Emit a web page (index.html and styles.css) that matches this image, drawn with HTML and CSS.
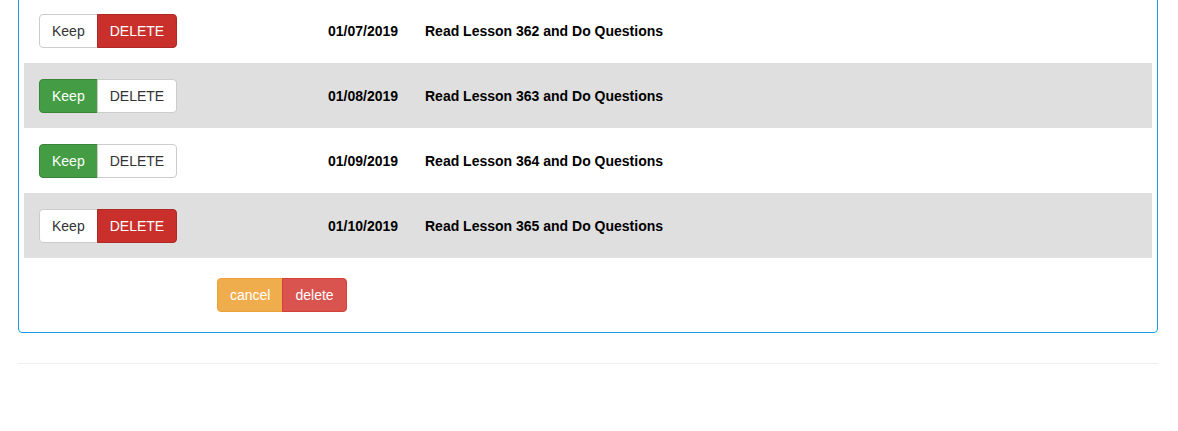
FILE: index.html
```html
<!DOCTYPE html>
<html lang="en">
<head>
  <meta charset="UTF-8">
  <meta name="viewport" content="width=device-width, initial-scale=1.0">
  <title>Lesson Review</title>
  <link rel="stylesheet" href="styles.css">
</head>
<body>
  <div class="container">
    <div class="panel">
      <div class="row">
        <div class="btn-group"><button class="btn">Keep</button><button class="btn red">DELETE</button></div>
        <span class="date">01/07/2019</span>
        <span class="task">Read Lesson 362 and Do Questions</span>
      </div>
      <div class="row striped">
        <div class="btn-group"><button class="btn green">Keep</button><button class="btn">DELETE</button></div>
        <span class="date">01/08/2019</span>
        <span class="task">Read Lesson 363 and Do Questions</span>
      </div>
      <div class="row">
        <div class="btn-group"><button class="btn green">Keep</button><button class="btn">DELETE</button></div>
        <span class="date">01/09/2019</span>
        <span class="task">Read Lesson 364 and Do Questions</span>
      </div>
      <div class="row striped">
        <div class="btn-group"><button class="btn">Keep</button><button class="btn red">DELETE</button></div>
        <span class="date">01/10/2019</span>
        <span class="task">Read Lesson 365 and Do Questions</span>
      </div>
      <div class="actions">
        <div class="btn-group"><button class="btn warning">cancel</button><button class="btn danger">delete</button></div>
      </div>
    </div>
    <hr>
  </div>
</body>
</html>
```

FILE: styles.css
```css
body { margin: 0; font-family: "Liberation Sans", Arial, sans-serif; font-size: 14px; line-height: 20px; color: #000; background: #fff; }
.container { width: 1140px; margin-left: 18px; }
.panel { margin-top: -8px; border: 1px solid #1b9de8; border-radius: 4px; padding: 5px 5px 20px; }
.row { display: grid; grid-template-columns: 289px 97px 1fr; align-items: center; height: 65px; padding-left: 15px; }
.striped { background: #dfdfdf; }
.date, .task { font-weight: bold; }
.btn-group { display: flex; }
.btn { font-family: inherit; font-size: 14px; line-height: 20px; padding: 6px 12px; margin: 0; border: 1px solid #ccc; background: #fff; color: #333; cursor: pointer; }
.btn-group .btn:first-child { border-radius: 4px 0 0 4px; }
.btn-group .btn:last-child { border-radius: 0 4px 4px 0; margin-left: -1px; }
.green { background: #449d44; border-color: #398439; color: #fff; }
.red { background: #c9302c; border-color: #ac2925; color: #fff; }
.warning { background: #f0ad4e; border-color: #eea236; color: #fff; }
.danger { background: #d9534f; border-color: #d43f3a; color: #fff; }
.actions { padding: 20px 0 0 193px; }
hr { margin: 30px 0 0; border: 0; border-top: 1px solid #eee; }
```
